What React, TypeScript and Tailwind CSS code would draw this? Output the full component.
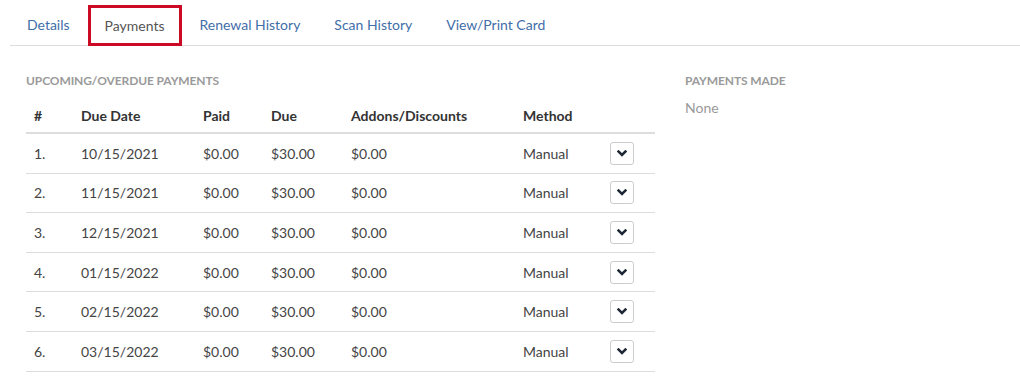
import React from "react";

const rows = [
  ["1.", "10/15/2021"],
  ["2.", "11/15/2021"],
  ["3.", "12/15/2021"],
  ["4.", "01/15/2022"],
  ["5.", "02/15/2022"],
  ["6.", "03/15/2022"],
];

const cols = "grid grid-cols-[47px_122px_68px_80px_172px_87px_53px]";

function Chevron() {
  return (
    <svg width="10" height="7" viewBox="0 0 10 7">
      <path d="M1.6 1.6 L5 5 L8.4 1.6" fill="none" stroke="#1d2735" strokeWidth="2.6" strokeLinecap="square" />
    </svg>
  );
}

export default function App() {
  const tabs = ["Details", "Payments", "Renewal History", "Scan History", "View/Print Card"];
  return (
    <div className="w-[1020px] h-[379px] bg-white overflow-hidden text-[14px] text-[#333]" style={{ fontFamily: "Lato, 'Open Sans', sans-serif" }}>
      <div className="ml-[10px] h-[46px] border-b border-[#dddddd] flex items-end">
        {tabs.map((t) =>
          t === "Payments" ? (
            <div key={t} className="h-[41px] mb-[-1px] px-[14px] mr-[2px] border-[3px] border-[#cc0a26] bg-white text-[#555] flex items-center">
              {t}
            </div>
          ) : (
            <div key={t} className={`h-[41px] ${t === "Details" ? "pl-[16px] pr-[15px]" : "px-[15px]"} mr-[2px] border border-transparent text-[#3f6ea8] flex items-center`}>
              {t}
            </div>
          )
        )}
      </div>
      <div className="flex pl-[26px] pt-[27px]">
        <div className="w-[629px]">
          <div className="h-[16px] leading-[16px] text-[12px] font-bold text-[#9a9a9a] mb-[9px] tracking-[-0.1px]">UPCOMING/OVERDUE PAYMENTS</div>
          <div className={`${cols} h-[36px] items-center border-b-2 border-[#dddddd] font-bold text-[#333]`}>
            <div className="pl-[8px]">#</div>
            <div className="pl-[8px]">Due Date</div>
            <div className="pl-[8px]">Paid</div>
            <div className="pl-[8px]">Due</div>
            <div className="pl-[8px]">Addons/Discounts</div>
            <div className="pl-[8px]">Method</div>
            <div></div>
          </div>
          {rows.map(([n, d]) => (
            <div key={n} className={`${cols} h-[39.6px] items-center border-b border-[#dddddd] text-[#444]`}>
              <div className="pl-[8px]">{n}</div>
              <div className="pl-[8px]">{d}</div>
              <div className="pl-[8px]">$0.00</div>
              <div className="pl-[8px]">$30.00</div>
              <div className="pl-[8px]">$0.00</div>
              <div className="pl-[8px]">Manual</div>
              <div className="pl-[8px]">
                <div className="w-[24px] h-[23px] border border-[#cccccc] rounded-[3px] bg-white flex items-center justify-center">
                  <Chevron />
                </div>
              </div>
            </div>
          ))}
        </div>
        <div className="ml-[30px]">
          <div className="h-[16px] leading-[16px] text-[12px] font-bold text-[#9a9a9a] tracking-[-0.1px]">PAYMENTS MADE</div>
          <div className="mt-[8px] text-[#999]">None</div>
        </div>
      </div>
    </div>
  );
}
